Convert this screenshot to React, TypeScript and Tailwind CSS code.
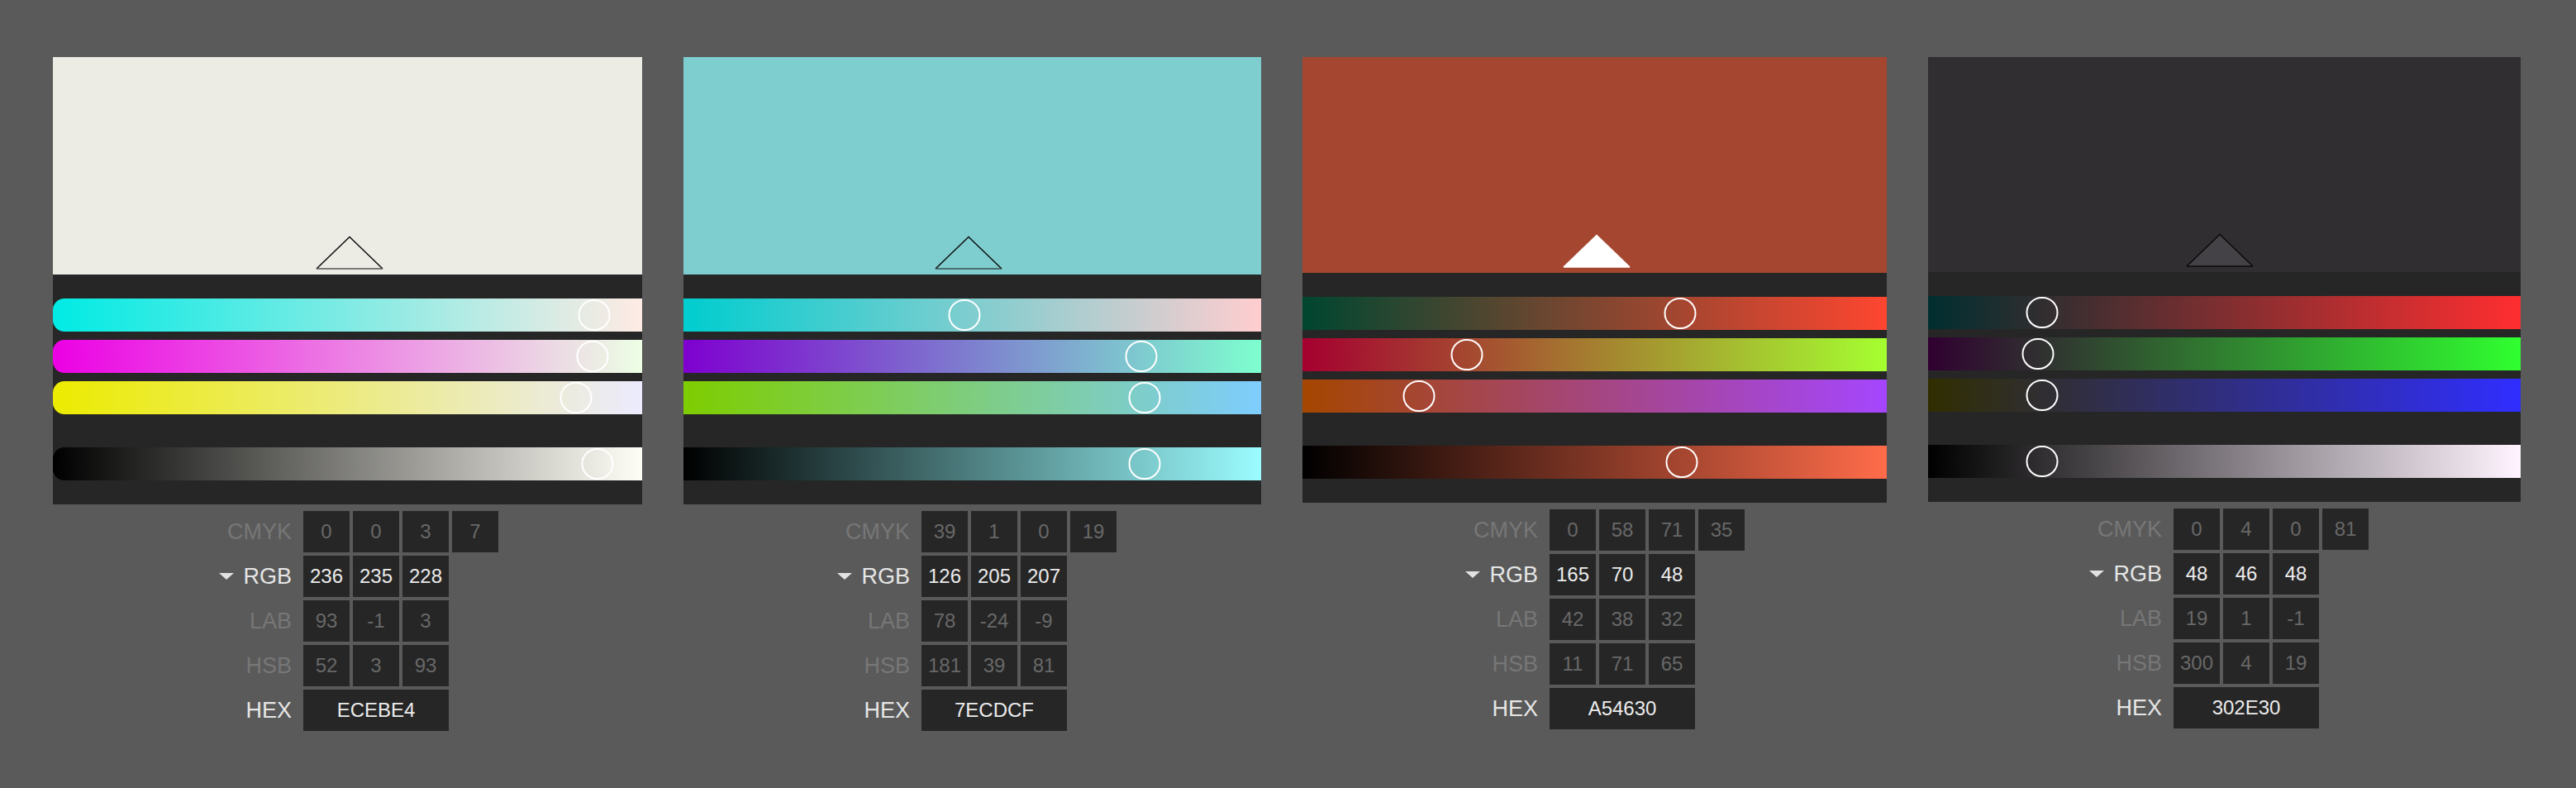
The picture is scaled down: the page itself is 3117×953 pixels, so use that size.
type Bar = { grad: string; pos: string };

type Swatch = {
  width: string;
  color: string;
  colorH: string;
  triLeft: string;
  triFill: string;
  triSide: string;
  triBase: string;
  rounded: boolean;
  bars: Bar[];
  tableMl: string;
  cmyk: string[];
  rgb: string[];
  lab: string[];
  hsb: string[];
  hex: string;
};

const swatches: Swatch[] = [
  {
    width: "w-[713px]",
    color: "bg-[#ECEBE4]",
    colorH: "h-[263px]",
    triLeft: "left-[318px]",
    triFill: "none",
    triSide: "#111111",
    triBase: "#555555",
    rounded: true,
    bars: [
      { grad: "bg-[linear-gradient(to_right,#00EBE4,#FFEBE4)]", pos: "left-[91.8%]" },
      { grad: "bg-[linear-gradient(to_right,#EC00E4,#ECFFE4)]", pos: "left-[91.6%]" },
      { grad: "bg-[linear-gradient(to_right,#ECEB00,#ECEBFF)]", pos: "left-[88.8%]" },
      { grad: "bg-[linear-gradient(to_right,#000000,#FFFEF6)]", pos: "left-[92.4%]" },
    ],
    tableMl: "ml-[169px]",
    cmyk: ["0", "0", "3", "7"],
    rgb: ["236", "235", "228"],
    lab: ["93", "-1", "3"],
    hsb: ["52", "3", "93"],
    hex: "ECEBE4",
  },
  {
    width: "w-[699px]",
    color: "bg-[#7ECDCF]",
    colorH: "h-[263px]",
    triLeft: "left-[304px]",
    triFill: "none",
    triSide: "#111111",
    triBase: "#3d4f50",
    rounded: false,
    bars: [
      { grad: "bg-[linear-gradient(to_right,#00CDCF,#FFCDCF)]", pos: "left-[48.6%]" },
      { grad: "bg-[linear-gradient(to_right,#7E00CF,#7EFFCF)]", pos: "left-[79.2%]" },
      { grad: "bg-[linear-gradient(to_right,#7ECD00,#7ECDFF)]", pos: "left-[79.8%]" },
      { grad: "bg-[linear-gradient(to_right,#000000,#9BFCFF)]", pos: "left-[79.8%]" },
    ],
    tableMl: "ml-[154px]",
    cmyk: ["39", "1", "0", "19"],
    rgb: ["126", "205", "207"],
    lab: ["78", "-24", "-9"],
    hsb: ["181", "39", "81"],
    hex: "7ECDCF",
  },
  {
    width: "w-[707px]",
    color: "bg-[#A54630]",
    colorH: "h-[261px]",
    triLeft: "left-[315px]",
    triFill: "#ffffff",
    triSide: "#ffffff",
    triBase: "#ffffff",
    rounded: false,
    bars: [
      { grad: "bg-[linear-gradient(to_right,#004630,#FF4630)]", pos: "left-[64.6%]" },
      { grad: "bg-[linear-gradient(to_right,#A50030,#A5FF30)]", pos: "left-[28.1%]" },
      { grad: "bg-[linear-gradient(to_right,#A54600,#A546FF)]", pos: "left-[19.9%]" },
      { grad: "bg-[linear-gradient(to_right,#000000,#FF6C4A)]", pos: "left-[64.9%]" },
    ],
    tableMl: "ml-[165px]",
    cmyk: ["0", "58", "71", "35"],
    rgb: ["165", "70", "48"],
    lab: ["42", "38", "32"],
    hsb: ["11", "71", "65"],
    hex: "A54630",
  },
  {
    width: "w-[717px]",
    color: "bg-[#302E30]",
    colorH: "h-[260px]",
    triLeft: "left-[312px]",
    triFill: "#444246",
    triSide: "#0a0a0a",
    triBase: "#0a0a0a",
    rounded: false,
    bars: [
      { grad: "bg-[linear-gradient(to_right,#002E30,#FF2E30)]", pos: "left-[19.3%]" },
      { grad: "bg-[linear-gradient(to_right,#300030,#30FF30)]", pos: "left-[18.5%]" },
      { grad: "bg-[linear-gradient(to_right,#302E00,#302EFF)]", pos: "left-[19.3%]" },
      { grad: "bg-[linear-gradient(to_right,#000000,#FFF4FF)]", pos: "left-[19.3%]" },
    ],
    tableMl: "ml-[163px]",
    cmyk: ["0", "4", "0", "81"],
    rgb: ["48", "46", "48"],
    lab: ["19", "1", "-1"],
    hsb: ["300", "4", "19"],
    hex: "302E30",
  },
];

const Marker = ({ fill, side, base }: { fill: string; side: string; base: string }) => (
  <svg width="82" height="42" viewBox="0 0 82 42">
    <polygon points="1,40 41,1.5 81,40" fill={fill} stroke="none" />
    <polyline points="1,40 41,1.5 81,40" fill="none" stroke={side} strokeWidth="1.6" />
    <line x1="1" y1="40" x2="81" y2="40" stroke={base} strokeWidth="1.4" />
  </svg>
);

const Slider = ({ bar, rounded, className }: { bar: Bar; rounded: boolean; className: string }) => (
  <div className={`relative h-[40px] ${bar.grad} ${rounded ? "rounded-l-[14px]" : ""} ${className}`}>
    <div
      className={`absolute top-1/2 ${bar.pos} -translate-x-1/2 -translate-y-1/2 w-[39px] h-[38px] rounded-full border-2 border-white`}
    />
  </div>
);

const Row = ({ label, values, active, bright, wide }: { label: string; values: string[]; active?: boolean; bright?: boolean; wide?: boolean }) => (
  <div className="flex items-center gap-[14px] h-[50px]">
    <div
      className={`w-[120px] flex items-center justify-end gap-[11px] text-[27px] leading-none ${
        bright ? "text-[#e6e6e6]" : "text-[#777777]"
      }`}
    >
      {active && (
        <svg width="18" height="8" viewBox="0 0 18 8">
          <polygon points="0,0 18,0 9,8" fill="#e2e2e2" />
        </svg>
      )}
      <span>{label}</span>
    </div>
    <div className="flex gap-[4px] h-full">
      {values.map((v, i) => (
        <div
          key={i}
          className={`${wide ? "w-[176px]" : "w-[56px]"} h-full bg-[#262626] flex items-center justify-center text-[24px] leading-none ${
            bright ? "text-[#ececec]" : "text-[#686868]"
          }`}
        >
          {v}
        </div>
      ))}
    </div>
  </div>
);

const Panel = ({ s }: { s: Swatch }) => (
  <div className={`${s.width} shrink-0 flex flex-col`}>
    <div className="bg-[#262626]">
      <div className={`relative ${s.colorH} ${s.color}`}>
        <div className={`absolute bottom-[5px] ${s.triLeft}`}>
          <Marker fill={s.triFill} side={s.triSide} base={s.triBase} />
        </div>
      </div>
      <div className="flex flex-col py-[29px]">
        <Slider bar={s.bars[0]} rounded={s.rounded} className="" />
        <Slider bar={s.bars[1]} rounded={s.rounded} className="mt-[10px]" />
        <Slider bar={s.bars[2]} rounded={s.rounded} className="mt-[10px]" />
        <Slider bar={s.bars[3]} rounded={s.rounded} className="mt-[40px]" />
      </div>
    </div>
    <div className={`mt-[8px] ${s.tableMl} flex flex-col gap-[4px]`}>
      <Row label="CMYK" values={s.cmyk} />
      <Row label="RGB" values={s.rgb} active bright />
      <Row label="LAB" values={s.lab} />
      <Row label="HSB" values={s.hsb} />
      <Row label="HEX" values={[s.hex]} bright wide />
    </div>
  </div>
);

export default function App() {
  return (
    <div className="w-[3117px] h-[953px] bg-[#5a5a5a] flex items-start gap-[50px] pl-[64px] pt-[69px] font-['Liberation_Sans',Arial,sans-serif] overflow-hidden">
      {swatches.map((s) => (
        <Panel key={s.hex} s={s} />
      ))}
    </div>
  );
}
